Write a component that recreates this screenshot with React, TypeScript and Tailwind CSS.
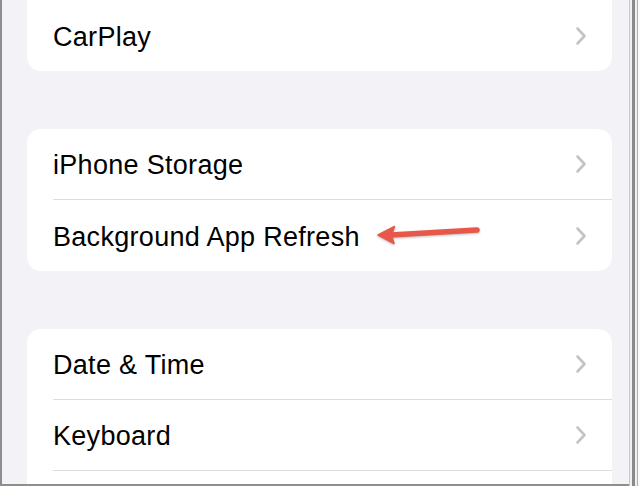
const font = { fontFamily: '"Liberation Sans", Arial, sans-serif' };

function Chevron() {
    return (
        <svg width="12" height="20" viewBox="0 0 12 20" fill="none" stroke="#c4c4c7" strokeWidth="2.6" strokeLinecap="round" strokeLinejoin="round">
            <polyline points="2.5 2.5 9.5 10 2.5 17.5" />
        </svg>
    );
}

function Arrow() {
    return (
        <svg
            className="absolute left-[348px] top-[23px] drop-shadow-[0_1px_1px_rgba(0,0,0,0.25)]"
            width="112"
            height="26"
            viewBox="0 0 112 26"
        >
            <line x1="16" y1="12" x2="102" y2="7" stroke="#e8584a" strokeWidth="5.5" strokeLinecap="round" />
            <polygon points="3,12 19.5,3.5 16.5,12.5 19,20.5" fill="#e8584a" stroke="#e8584a" strokeWidth="1.5" strokeLinejoin="round" />
        </svg>
    );
}

type Item = { label: string; arrow?: boolean };

function Row({ item, last }: { item: Item; last: boolean }) {
    return (
        <div className="relative flex h-[71px] shrink-0 items-center pl-[26px]">
            <div className={`flex h-full flex-1 items-center pr-[25px] ${last ? '' : 'border-b border-[#dcdce0]'}`}>
                <span className="flex-1 pt-[3px] text-[27px] leading-none tracking-[0.3px] text-black" style={font}>
                    {item.label}
                </span>
                <Chevron />
            </div>
            {item.arrow && <Arrow />}
        </div>
    );
}

function Card({ items, open, className = '' }: { items: Item[]; open?: boolean; className?: string }) {
    return (
        <div className={`shrink-0 bg-white ${open ? 'rounded-t-[14px]' : 'rounded-[14px]'} ${className}`}>
            {items.map((item, i) => (
                <Row key={item.label} item={item} last={!open && i === items.length - 1} />
            ))}
            {open && <div className="h-[40px]" />}
        </div>
    );
}

export default function App() {
    return (
        <div className="flex h-[486px] w-[640px] overflow-hidden bg-white">
            <div className="w-[2px] bg-[#8e8e8e]" />
            <div className="flex flex-1 flex-col overflow-hidden border-b-2 border-[#8e8e8e] bg-[#f2f2f7] pl-[25px] pr-[17px]">
                <Card items={[{ label: 'CarPlay' }]} className="rounded-t-none" />
                <Card items={[{ label: 'iPhone Storage' }, { label: 'Background App Refresh', arrow: true }]} className="relative mt-[58px]" />
                <Card items={[{ label: 'Date & Time' }, { label: 'Keyboard' }]} open className="mt-[58px]" />
            </div>
            <div className="w-[1px] bg-[#c9c9c9]" />
            <div className="w-[2px] bg-[#f0f0f0]" />
            <div className="w-[3px] bg-[#8a8a8a]" />
            <div className="w-[2px] bg-[#f0f0f0]" />
            <div className="w-[1px] bg-[#b0b0b0]" />
            <div className="w-[2px] bg-[#fafafa]" />
        </div>
    );
}
